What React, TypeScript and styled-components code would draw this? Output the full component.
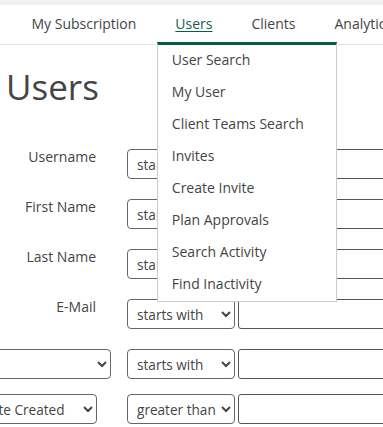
import React from 'react';
import styled, { createGlobalStyle } from 'styled-components';

const GlobalStyle = createGlobalStyle`
  html, body {
    margin: 0;
    padding: 0;
    background: #fff;
    overflow: hidden;
  }
  body {
    font-family: "Open Sans", "Liberation Sans", sans-serif;
    color: #444;
  }
`;

const TopStrip = styled.div`
  height: 5px;
  background-color: #f2f2f2;
`;

const Nav = styled.ul`
  display: flex;
  margin: 0;
  padding: 0 0 0 12px;
  list-style: none;
  height: 39px;
  background-color: #fff;
  border-bottom: 1px solid #e6e6e6;
  white-space: nowrap;
`;

const NavItem = styled.li<{ $active?: boolean }>`
  position: relative;
  padding: 0 19.5px;
  font-size: 14px;
  line-height: 38px;
  color: ${p => (p.$active ? '#1d5c48' : '#444')};

  > span {
    text-decoration: ${p => (p.$active ? 'underline' : 'none')};
    text-decoration-color: #00603f;
    text-underline-offset: 2px;
  }
`;

const Dropdown = styled.ul`
  position: absolute;
  top: 37px;
  left: 1px;
  width: 178px;
  margin: 0;
  padding: 0;
  list-style: none;
  background-color: #fff;
  border: 1px solid #ccc;
  border-top: 3px solid #00603f;
  z-index: 10;

  > li {
    height: 32px;
    line-height: 30px;
    padding-left: 14px;
    font-size: 14px;
    color: #444;
  }
`;

const Title = styled.h1`
  margin: 18px 0 0 6px;
  font-size: 35px;
  font-weight: 400;
  line-height: 48px;
  color: #444;
`;

const Form = styled.div`
  display: flex;
  flex-direction: column;
  margin-top: 38px;
`;

const Row = styled.div<{ $gap: number }>`
  display: flex;
  align-items: flex-start;
  margin-bottom: ${p => p.$gap}px;
`;

const LabelCell = styled.div<{ $pad: number }>`
  width: 127px;
  flex: none;
  display: flex;
  justify-content: flex-end;
  box-sizing: border-box;
  padding-right: ${p => p.$pad}px;
`;

const Label = styled.label`
  font-size: 14px;
  line-height: 16px;
  color: #444;
`;

const Select = styled.select<{ $w: number }>`
  flex: none;
  width: ${p => p.$w}px;
  height: 30px;
  box-sizing: border-box;
  padding: 0 0 0 5px;
  font-family: "Open Sans", "Liberation Sans", sans-serif;
  font-size: 13.6px;
  color: #444;
  background-color: #fff;
  border: 1px solid #666;
  border-radius: 4px;
`;

const Input = styled.input`
  flex: none;
  width: 200px;
  height: 30px;
  box-sizing: border-box;
  margin-left: 3px;
  border: 1px solid #555;
  border-radius: 3px;
  background: #fff;
`;

type Field = { label?: string; pick?: string; pickW?: number; pad: number; op: string; gap: number };

const fields: Field[] = [
  { label: 'Username', pad: 31, op: 'starts with', gap: 20 },
  { label: 'First Name', pad: 31, op: 'starts with', gap: 20 },
  { label: 'Last Name', pad: 31, op: 'starts with', gap: 20 },
  { label: 'E-Mail', pad: 31, op: 'starts with', gap: 20 },
  { pick: '', pickW: 170, pad: 16, op: 'starts with', gap: 15 },
  { pick: 'Date Created', pickW: 126, pad: 30, op: 'greater than', gap: 0 },
];

const menu = [
  'User Search',
  'My User',
  'Client Teams Search',
  'Invites',
  'Create Invite',
  'Plan Approvals',
  'Search Activity',
  'Find Inactivity',
];

export default function App() {
  return (
    <>
      <GlobalStyle />
      <TopStrip />
      <Nav>
        <NavItem><span>My Subscription</span></NavItem>
        <NavItem $active>
          <span>Users</span>
          <Dropdown>
            {menu.map(m => <li key={m}>{m}</li>)}
          </Dropdown>
        </NavItem>
        <NavItem><span>Clients</span></NavItem>
        <NavItem><span>Analytics</span></NavItem>
      </Nav>
      <Title>Users</Title>
      <Form>
        {fields.map((f, i) => (
          <Row key={i} $gap={f.gap}>
            <LabelCell $pad={f.pad}>
              {f.label !== undefined
                ? <Label>{f.label}</Label>
                : <Select $w={f.pickW || 120} defaultValue={f.pick}><option value={f.pick}>{f.pick}</option></Select>}
            </LabelCell>
            <Select $w={108} defaultValue={f.op}>
              <option>{f.op}</option>
            </Select>
            <Input />
          </Row>
        ))}
      </Form>
    </>
  );
}
